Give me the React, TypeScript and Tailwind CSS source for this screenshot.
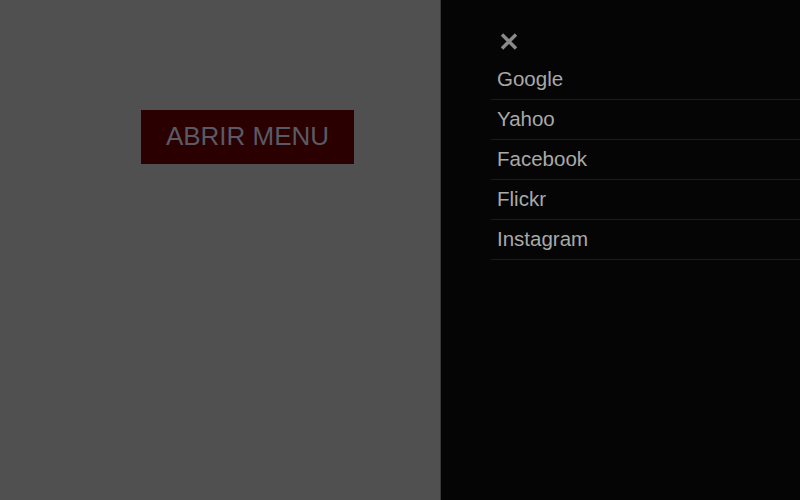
import { useState } from "react";

const links = ["Google", "Yahoo", "Facebook", "Flickr", "Instagram"];

const App = () => {
  const [isOpen, setIsOpen] = useState(true);

  return (
    <div className="flex h-[500px] w-[800px] font-['Liberation_Sans',Arial,sans-serif]">
      {/* Page behind overlay */}
      <div className="flex-1 bg-[#505050] pl-[141px] pt-[110px]">
        <button
          className="h-[54px] w-[213px] bg-[#2a0000] pb-[2px] text-[26px] text-[#5a5a66]"
          onClick={() => setIsOpen(true)}
        >
          ABRIR MENU
        </button>
      </div>

      {/* Side menu */}
      {isOpen && (
        <nav className="w-[360px] border-l border-[#3a3a3a] bg-[#050505] pt-[33px]">
          <button
            className="ml-[59px] block h-[17px] w-[18px]"
            aria-label="Cerrar menu"
            onClick={() => setIsOpen(false)}
          >
            <svg viewBox="0 0 18 17" width="18" height="17">
              <path
                d="M2 1.5 L16 15.5 M16 1.5 L2 15.5"
                stroke="#8a8a8a"
                strokeWidth="3.4"
              />
            </svg>
          </button>
          <ul className="ml-[50px] mt-[10px]">
            {links.map((link) => (
              <li
                key={link}
                className="flex h-[40px] items-center border-b border-[#1c1c1c] px-[6px] pb-[1px] text-[20.5px] text-[#a9a9a9]"
              >
                <a href="#">{link}</a>
              </li>
            ))}
          </ul>
        </nav>
      )}
    </div>
  );
};

export default App;
